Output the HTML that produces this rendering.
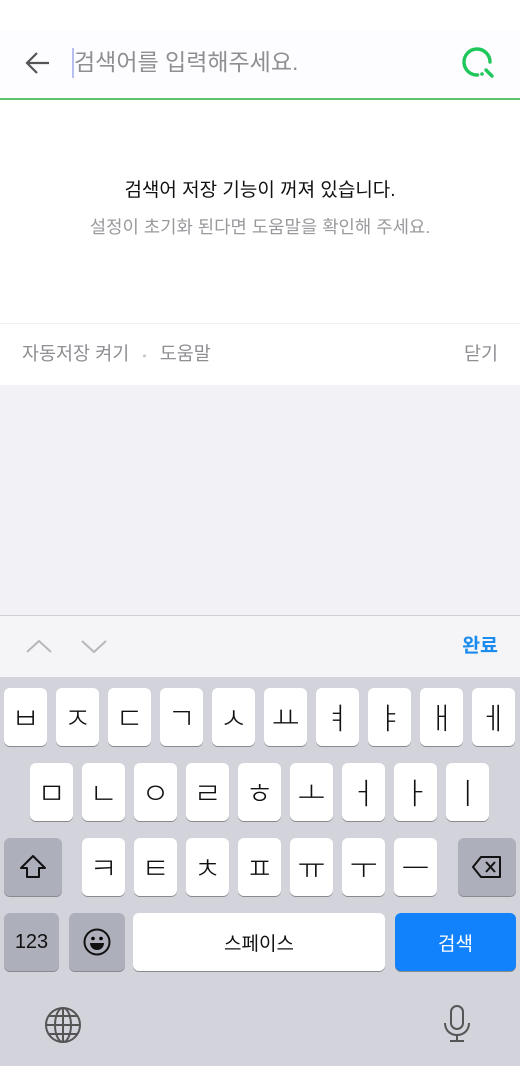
<!DOCTYPE html>
<html><head><meta charset="utf-8"><style>
*{margin:0;padding:0;box-sizing:border-box}
body{width:520px;height:1066px;position:relative;overflow:hidden;background:#fff;font-family:"Liberation Sans","Noto Sans CJK KR",sans-serif}
.a{position:absolute}
.k{position:absolute;background:#fff;border-radius:6px;box-shadow:0 1px 0 #898a8e;display:flex;align-items:center;justify-content:center;font-size:25px;color:#111;height:58px;width:43px;font-family:"Noto Sans CJK KR",sans-serif}
.k>i{font-style:normal;display:inline-block;transform:scale(1.22,1.2);font-weight:300}
.g{background:#adb0bb}
</style></head><body>
<div class="a" style="top:30px;left:0;width:520px;height:69px;background:#fdfcfe"></div>
<svg class="a" style="left:24px;top:50px" width="28" height="26" viewBox="0 0 28 26"><path d="M25 13H3M13 3L3 13l10 10" fill="none" stroke="#555" stroke-width="2.2"/></svg>
<div class="a" style="left:72px;top:48px;width:2px;height:30px;background:#b8bff0"></div>
<div class="a" style="left:74px;top:45px;font-size:23px;color:#8e8e93;line-height:34px">검색어를 입력해주세요.</div>
<svg class="a" style="left:462px;top:44px" width="36" height="36" viewBox="0 0 36 36"><path d="M15.5 31A13 13 0 1 1 28 18" fill="none" stroke="#1ec75a" stroke-width="3.4" stroke-linecap="round"/><path d="M24 26l6 6" stroke="#1ec75a" stroke-width="3.4" stroke-linecap="round"/><circle cx="20" cy="30" r="1.8" fill="#1ec75a"/></svg>
<div class="a" style="top:98px;left:0;width:520px;height:2px;background:#5cc46a"></div>
<div class="a" style="top:177px;left:0;width:520px;text-align:center;font-size:19px;color:#111;line-height:28px">검색어 저장 기능이 꺼져 있습니다.</div>
<div class="a" style="top:213px;left:0;width:520px;text-align:center;font-size:17.8px;color:#9a9a9e;line-height:28px">설정이 초기화 된다면 도움말을 확인해 주세요.</div>
<div class="a" style="top:323px;left:0;width:520px;height:1px;background:#f0f0f2"></div>
<div class="a" style="top:340px;left:22px;font-size:18.5px;color:#8e8e93;line-height:28px">자동저장 켜기 <span style="color:#ccc;font-size:12px;margin:0 8px">•</span> 도움말</div>
<div class="a" style="top:340px;right:22px;font-size:18.5px;color:#8e8e93;line-height:28px">닫기</div>
<div class="a" style="top:385px;left:0;width:520px;height:230px;background:#f2f2f6"></div>
<div class="a" style="top:615px;left:0;width:520px;height:1px;background:#cfcfd4"></div>
<div class="a" style="top:616px;left:0;width:520px;height:61px;background:#f5f5f7"></div>
<svg class="a" style="left:24px;top:636px" width="90" height="20"><path d="M3 16L15 5l12 11M58 5l12 11 12-11" fill="none" stroke="#b8b8bc" stroke-width="2"/></svg>
<div class="a" style="top:632px;right:22px;font-size:19.5px;color:#1a8cf0;font-weight:bold;line-height:28px">완료</div>
<div class="a" style="top:677px;left:0;width:520px;height:389px;background:#d3d4db"></div>
<div class="k" style="left:4px;top:688px"><i>ㅂ</i></div><div class="k" style="left:56px;top:688px"><i>ㅈ</i></div><div class="k" style="left:108px;top:688px"><i>ㄷ</i></div><div class="k" style="left:160px;top:688px"><i>ㄱ</i></div><div class="k" style="left:212px;top:688px"><i>ㅅ</i></div><div class="k" style="left:264px;top:688px"><i>ㅛ</i></div><div class="k" style="left:316px;top:688px"><i>ㅕ</i></div><div class="k" style="left:368px;top:688px"><i>ㅑ</i></div><div class="k" style="left:420px;top:688px"><i>ㅐ</i></div><div class="k" style="left:472px;top:688px"><i>ㅔ</i></div>
<div class="k" style="left:30px;top:763px"><i>ㅁ</i></div><div class="k" style="left:82px;top:763px"><i>ㄴ</i></div><div class="k" style="left:134px;top:763px"><i>ㅇ</i></div><div class="k" style="left:186px;top:763px"><i>ㄹ</i></div><div class="k" style="left:238px;top:763px"><i>ㅎ</i></div><div class="k" style="left:290px;top:763px"><i>ㅗ</i></div><div class="k" style="left:342px;top:763px"><i>ㅓ</i></div><div class="k" style="left:394px;top:763px"><i>ㅏ</i></div><div class="k" style="left:446px;top:763px"><i>ㅣ</i></div>
<div class="k g" style="left:4px;top:838px;width:58px"><svg width="30" height="28" viewBox="0 0 30 28"><path d="M15 3L3 15h6v9h12v-9h6z" fill="none" stroke="#111" stroke-width="2" stroke-linejoin="round"/></svg></div>
<div class="k" style="left:82px;top:838px"><i>ㅋ</i></div><div class="k" style="left:134px;top:838px"><i>ㅌ</i></div><div class="k" style="left:186px;top:838px"><i>ㅊ</i></div><div class="k" style="left:238px;top:838px"><i>ㅍ</i></div><div class="k" style="left:290px;top:838px"><i>ㅠ</i></div><div class="k" style="left:342px;top:838px"><i>ㅜ</i></div><div class="k" style="left:394px;top:838px"><i>ㅡ</i></div>
<div class="k g" style="left:458px;top:838px;width:58px"><svg width="32" height="26" viewBox="0 0 32 26"><path d="M10 3h19v20H10L2 13z" fill="none" stroke="#111" stroke-width="2" stroke-linejoin="round"/><path d="M15 8l9 10M24 8l-9 10" stroke="#111" stroke-width="2"/></svg></div>
<div class="k g" style="left:4px;top:913px;width:55px;font-size:20px;font-family:'Liberation Sans',sans-serif">123</div>
<div class="k g" style="left:69px;top:913px;width:56px"><svg width="30" height="30" viewBox="0 0 30 30"><circle cx="15" cy="15" r="12.5" fill="none" stroke="#111" stroke-width="2"/><circle cx="11" cy="11.5" r="1.8"/><circle cx="19" cy="11.5" r="1.8"/><path d="M8 16h14c0 4-3 7-7 7s-7-3-7-7z" fill="#111"/></svg></div>
<div class="k" style="left:133px;top:913px;width:252px;font-size:19px">스페이스</div>
<div class="k" style="left:395px;top:913px;width:121px;background:#1182fc;color:#fff;font-size:19px">검색</div>
<svg class="a" style="left:44px;top:1006px" width="38" height="38" viewBox="0 0 38 38"><g fill="none" stroke="#555" stroke-width="2"><circle cx="19" cy="19" r="17"/><ellipse cx="19" cy="19" rx="8" ry="17"/><path d="M19 2v34M2 19h34M5 10h28M5 28h28"/></g></svg>
<svg class="a" style="left:442px;top:1004px" width="30" height="40" viewBox="0 0 30 40"><g fill="none" stroke="#555" stroke-width="2"><rect x="9" y="2" width="12" height="23" rx="6"/><path d="M3 19c0 7 5 12 12 12s12-5 12-12M15 31v6M8 37h14"/></g></svg>
</body></html>
